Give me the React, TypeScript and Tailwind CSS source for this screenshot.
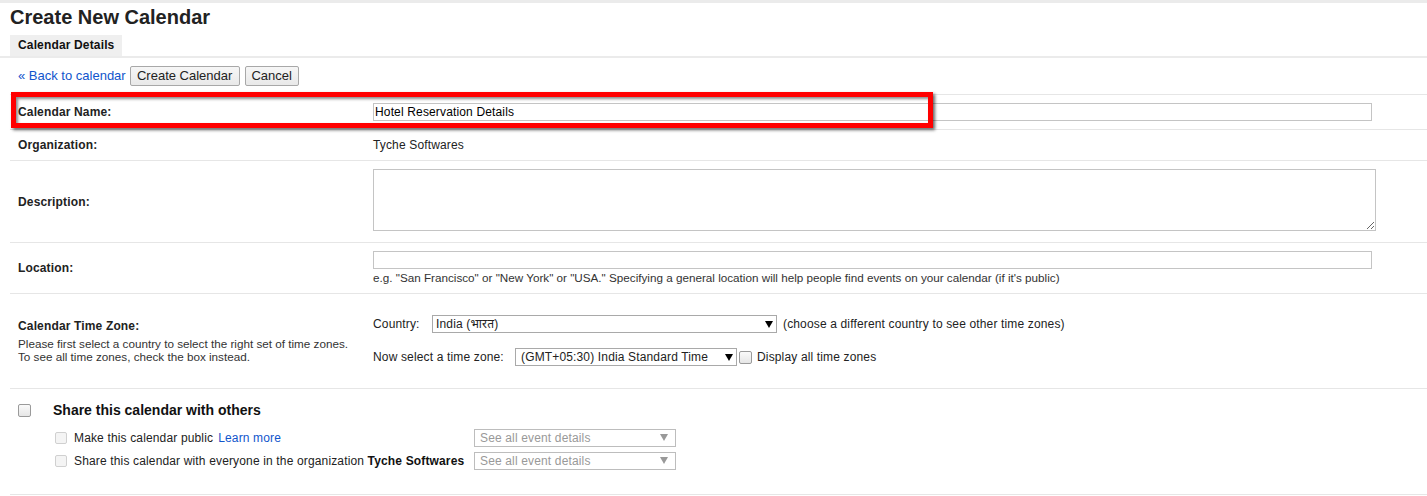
import React from "react";

const Arrow = ({ color = "#000" }: { color?: string }) => (
  <svg width="8" height="7" viewBox="0 0 8 7" className="shrink-0">
    <polygon points="0,0 8,0 4,7" fill={color} />
  </svg>
);

const Check = ({ light = false }: { light?: boolean }) => (
  <div
    className={
      light
        ? "w-[12px] h-[12px] rounded-[2px] border border-[#d0d0d0] bg-[#f4f4f4] shrink-0"
        : "w-[13px] h-[13px] rounded-[2px] border border-[#9a9a9a] bg-gradient-to-b from-[#fafafa] to-[#e6e6e6] shrink-0"
    }
  />
);

export default function App() {
  return (
    <div className="relative w-[1427px] h-[496px] overflow-hidden bg-white text-[12px] tracking-[0.15px] text-[#222] font-['Liberation_Sans','Noto_Sans','Noto_Sans_Devanagari',Arial,sans-serif]">
      <div className="h-[3px] bg-[#ebebeb]" />
      <h1 className="mt-[2px] mb-[6px] pl-[10px] text-[20px] leading-[24px] font-bold text-[#222] tracking-normal">
        Create New Calendar
      </h1>
      <div className="flex pl-[10px]">
        <div className="w-[112px] h-[21px] pl-[8px] bg-[#efefef] font-bold leading-[21px] text-[#111]">
          Calendar Details
        </div>
      </div>
      <div className="h-[2px] bg-[#ebebeb]" />

      <div className="flex items-center h-[36px] pl-[18px] gap-[4px] tracking-normal">
        <a className="text-[13px] text-[#1155cc] leading-[20px] cursor-pointer">
          « Back to calendar
        </a>
        <button className="w-[110px] h-[20px] border border-[#a8a8a8] rounded-[2px] bg-gradient-to-b from-[#f6f6f6] to-[#e9e9e9] text-[13px] leading-[18px] text-[#222]">
          Create Calendar
        </button>
        <button className="ml-[1px] w-[54px] h-[20px] border border-[#a8a8a8] rounded-[2px] bg-gradient-to-b from-[#f6f6f6] to-[#e9e9e9] text-[13px] leading-[18px] text-[#222]">
          Cancel
        </button>
      </div>

      <div className="ml-[10px]">
        {/* Calendar Name */}
        <div className="flex items-center h-[35px] border-t border-[#e6e6e6]">
          <div className="w-[363px] pl-[8px] font-bold">Calendar Name:</div>
          <input
            readOnly
            value="Hotel Reservation Details"
            className="w-[999px] h-[18px] border border-[#c4c4c4] px-[1px] text-[12px] text-black outline-none"
          />
        </div>

        {/* Organization */}
        <div className="flex items-center h-[31px] border-t border-[#e6e6e6]">
          <div className="w-[363px] pl-[8px] font-bold">Organization:</div>
          <div>Tyche Softwares</div>
        </div>

        {/* Description */}
        <div className="flex h-[82px] border-t border-[#e6e6e6]">
          <div className="w-[363px] pl-[8px] font-bold self-center">Description:</div>
          <div className="pt-[8px]">
            <textarea
              readOnly
              className="block w-[1003px] h-[62px] border border-[#c4c4c4] outline-none"
            />
          </div>
        </div>

        {/* Location */}
        <div className="flex h-[51px] border-t border-[#e6e6e6]">
          <div className="w-[363px] pl-[8px] font-bold self-center">Location:</div>
          <div className="pt-[8px]">
            <input
              readOnly
              className="block w-[999px] h-[18px] border border-[#c4c4c4] outline-none"
            />
            <div className="mt-[2px] leading-[14px] text-[11.7px] tracking-normal text-[#333]">
              e.g. "San Francisco" or "New York" or "USA." Specifying a general location will help people find events on your calendar (if it's public)
            </div>
          </div>
        </div>

        {/* Time zone */}
        <div className="flex h-[95px] border-t border-[#e6e6e6]">
          <div className="w-[363px] pl-[8px] self-center">
            <div className="font-bold leading-[15px] mb-[3px]">Calendar Time Zone:</div>
            <div className="text-[11.7px] tracking-normal leading-[13px] text-[#333]">
              Please first select a country to select the right set of time zones.
              <br />
              To see all time zones, check the box instead.
            </div>
          </div>
          <div className="pt-[21px]">
            <div className="flex items-center h-[18px]">
              <span className="w-[59px]">Country:</span>
              <div className="flex items-center justify-between w-[345px] h-[18px] border border-[#a9a9a9] pl-[3px] pr-[3px] bg-white">
                <span className="leading-[16px]">India (भारत)</span>
                <Arrow />
              </div>
              <span className="ml-[6px]">(choose a different country to see other time zones)</span>
            </div>
            <div className="flex items-center h-[18px] mt-[15px]">
              <span className="w-[142px]">Now select a time zone:</span>
              <div className="flex items-center justify-between w-[222px] h-[18px] border border-[#a9a9a9] pl-[5px] pr-[3px] bg-white">
                <span className="leading-[16px]">(GMT+05:30) India Standard Time</span>
                <Arrow />
              </div>
              <div className="ml-[2px]">
                <Check />
              </div>
              <span className="ml-[5px]">Display all time zones</span>
            </div>
          </div>
        </div>

        {/* Share */}
        <div className="h-[106px] border-t border-[#e6e6e6] pt-[13px]">
          <div className="flex items-center h-[17px] pl-[8px]">
            <Check />
            <span className="ml-[22px] text-[14px] font-bold text-[#111] leading-[17px] tracking-normal">
              Share this calendar with others
            </span>
          </div>
          <div className="mt-[7px] pl-[45px]">
            <div className="flex items-center h-[23px]">
              <div className="flex items-center w-[419px]">
                <Check light />
                <span className="ml-[7px]">Make this calendar public</span>
                <a className="ml-[5px] text-[#1155cc] cursor-pointer">Learn more</a>
              </div>
              <div className="flex items-center justify-between w-[202px] h-[18px] border border-[#bdbdbd] pl-[5px] pr-[7px] text-[#999]">
                <span>See all event details</span>
                <Arrow color="#999" />
              </div>
            </div>
            <div className="flex items-center h-[23px]">
              <div className="flex items-center w-[419px]">
                <Check light />
                <span className="ml-[7px]">
                  Share this calendar with everyone in the organization{" "}
                  <b className="text-[#111]">Tyche Softwares</b>
                </span>
              </div>
              <div className="flex items-center justify-between w-[202px] h-[18px] border border-[#bdbdbd] pl-[5px] pr-[7px] text-[#999]">
                <span>See all event details</span>
                <Arrow color="#999" />
              </div>
            </div>
          </div>
        </div>
        <div className="border-t border-[#e6e6e6]" />
      </div>

      {/* Red highlight box */}
      <div className="absolute left-[11px] top-[92px] w-[922px] h-[36px] border-[5px] border-[#ff0000] shadow-[2px_2px_3px_rgba(0,0,0,0.6),inset_2px_2px_3px_rgba(0,0,0,0.45)] pointer-events-none" />
    </div>
  );
}
